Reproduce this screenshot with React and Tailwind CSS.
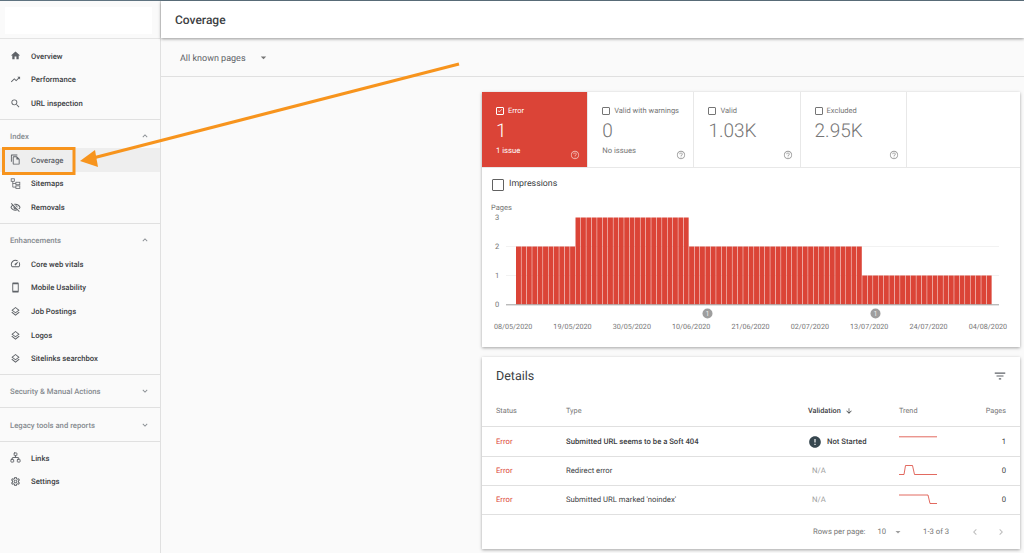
import React from "react";
import {
  MdHome,
  MdTrendingUp,
  MdSearch,
  MdOutlineFileCopy,
  MdOutlineVisibilityOff,
  MdOutlineSpeed,
  MdOutlineSmartphone,
  MdOutlineLayers,
  MdOutlineSettings,
  MdExpandLess,
  MdExpandMore,
  MdOutlineHelpOutline,
  MdFilterList,
  MdArrowDownward,
  MdChevronLeft,
  MdChevronRight,
  MdArrowDropDown,
  MdError,
  MdCheck,
} from "react-icons/md";
import { Network } from "lucide-react";

const SitemapIcon = ({ className }) => (
  <svg viewBox="0 0 14 14" fill="none" stroke="currentColor" strokeWidth="1" className={className}>
    <rect x="1.5" y="1" width="4" height="3.2" />
    <rect x="7.5" y="5.4" width="5" height="3.2" />
    <rect x="7.5" y="10" width="5" height="3.2" />
    <path d="M3.5 4.2V11.6H7.5M3.5 7H7.5" />
  </svg>
);

const NavItem = ({ icon: Icon, label, active }) => (
  <div className={`flex h-[23.7px] items-center pl-[10px] ${active ? "bg-[#eeeeee]" : ""}`}>
    <Icon className="h-[11px] w-[11px] shrink-0 text-[#5f6368]" />
    <span className={`ml-[10px] pt-px text-[7.7px] font-medium ${active ? "text-[#5f6368]" : "text-[#3c4043]"}`}>{label}</span>
  </div>
);

const SectionHead = ({ label, open, className }) => (
  <div className={`flex items-center justify-between pl-[10px] pr-[10px] text-[7.7px] font-medium text-[#868b90] ${className}`}>
    <span className="pt-[2px]">{label}</span>
    {open ? <MdExpandLess className="h-[10px] w-[10px]" /> : <MdExpandMore className="h-[10px] w-[10px]" />}
  </div>
);

const Sidebar = () => (
  <aside className="flex w-[161px] shrink-0 flex-col border-r border-[#e0e0e0] bg-[#fafafa]">
    <div className="h-[38px] shrink-0 border-b border-[#e4e4e4] px-[5px] pt-[6px]">
      <div className="h-[27px] w-[147px] bg-white" />
    </div>
    <div className="border-b border-[#e0e0e0] pb-[4px] pt-[5px]">
      <NavItem icon={MdHome} label="Overview" />
      <NavItem icon={MdTrendingUp} label="Performance" />
      <NavItem icon={MdSearch} label="URL inspection" />
    </div>
    <div className="border-b border-[#e0e0e0] pb-[4px]">
      <SectionHead label="Index" open className="h-[28px] pt-[4px]" />
      <NavItem icon={MdOutlineFileCopy} label="Coverage" active />
      <NavItem icon={SitemapIcon} label="Sitemaps" />
      <NavItem icon={MdOutlineVisibilityOff} label="Removals" />
    </div>
    <div className="border-b border-[#e0e0e0] pb-[3.5px]">
      <SectionHead label="Enhancements" open className="h-[28px] pt-[4px]" />
      <NavItem icon={MdOutlineSpeed} label="Core web vitals" />
      <NavItem icon={MdOutlineSmartphone} label="Mobile Usability" />
      <NavItem icon={MdOutlineLayers} label="Job Postings" />
      <NavItem icon={MdOutlineLayers} label="Logos" />
      <NavItem icon={MdOutlineLayers} label="Sitelinks searchbox" />
    </div>
    <SectionHead label="Security & Manual Actions" className="h-[33px] border-b border-[#e0e0e0]" />
    <SectionHead label="Legacy tools and reports" className="h-[34px] border-b border-[#e0e0e0]" />
    <div className="pt-[4px]">
      <NavItem icon={Network} label="Links" />
      <NavItem icon={MdOutlineSettings} label="Settings" />
    </div>
  </aside>
);

const Tab = ({ label, value, sub, active }) => (
  <div
    className={`relative h-[75px] w-[106.2px] border-r border-[#e8e8e8] pl-[14px] ${
      active ? "bg-[#db4437] text-white" : "bg-white text-[#757575]"
    }`}
  >
    <div className="flex items-center pt-[14px] text-[7.5px] leading-[9px]">
      <span
        className={`mr-[4px] flex h-[8px] w-[8px] items-center justify-center rounded-[1px] border ${
          active ? "border-white" : "border-[#757575]"
        }`}
      >
        {active && <MdCheck className="h-[7px] w-[7px]" />}
      </span>
      <span>{label}</span>
    </div>
    <div className="mt-[4px] text-[19px] font-light leading-[24px]">{value}</div>
    {sub && <div className="mt-[3px] text-[7.7px] leading-[10px]">{sub}</div>}
    <MdOutlineHelpOutline className={`absolute bottom-[7px] right-[7px] h-[10px] w-[10px] ${active ? "text-[#f0b5ae]" : "text-[#9e9e9e]"}`} />
  </div>
);

// daily bars, height in pages: 11 at 2, 21 at 3, 32 at 2, 24 at 1
const bars = [
  ...Array(11).fill(2),
  ...Array(21).fill(3),
  ...Array(32).fill(2),
  ...Array(24).fill(1),
];

const dates = [
  "08/05/2020",
  "19/05/2020",
  "30/05/2020",
  "10/06/2020",
  "21/06/2020",
  "02/07/2020",
  "13/07/2020",
  "24/07/2020",
  "04/08/2020",
];

// plot coordinates are the card's: x from its left edge, y from the top of the svg
const Chart = () => {
  const base = 103.5;
  return (
    <svg width="538" height="120" className="block">
      <text x="9" y="9" fontSize="7.5" fill="#757575" fontFamily="Roboto">Pages</text>
      {[0, 1, 2, 3].map((n) => (
        <text key={n} x="15" y={base - n * 29 + 2.5} fontSize="7.5" fill="#757575" fontFamily="Roboto" textAnchor="middle">
          {n}
        </text>
      ))}
      <line x1="24" x2="517" y1={base - 29} y2={base - 29} stroke="#f2f2f2" />
      <line x1="24" x2="517" y1={base - 58} y2={base - 58} stroke="#f2f2f2" />
      {bars.map((h, i) => (
        <rect key={i} x={34 + i * 5.41} y={base - h * 29} width="4.95" height={h * 29} fill="#db4437" />
      ))}
      <line x1="24" x2="517" y1={base + 0.3} y2={base + 0.3} stroke="#9e9e9e" />
      {[225.5, 393.5].map((x) => (
        <g key={x}>
          <circle cx={x} cy="112.5" r="5" fill="#9e9e9e" />
          <text x={x} y="115" fontSize="7" fill="#eeeeee" textAnchor="middle" fontFamily="Roboto">1</text>
        </g>
      ))}
    </svg>
  );
};

const Spark = ({ d }) => (
  <svg width="38" height="20" viewBox="0 0 38 20" fill="none" stroke="#db4437" strokeWidth="0.8" className="block">
    <path d={d} />
  </svg>
);

const rows = [
  { type: "Submitted URL seems to be a Soft 404", bold: true, pages: 1, d: "M0 4.8H38", h: "h-[30px]" },
  { type: "Redirect error", pages: 0, d: "M0 13.5H5L6.5 4.5H13.5L15.5 13.5H38", h: "h-[29px]" },
  { type: "Submitted URL marked 'noindex'", pages: 0, d: "M0 5H29L31 13.5H38", h: "h-[29px]" },
];

const DetailRow = ({ row }) => (
  <div className={`flex items-center border-b border-[#e0e0e0] text-[7.7px] ${row.h}`}>
    <span className="w-[84px] shrink-0 pl-[14px] text-[#db4437]">Error</span>
    <span className={`w-[242px] shrink-0 text-[#3c4043] ${row.bold ? "font-medium" : ""}`}>{row.type}</span>
    <span className="w-[91px] shrink-0">
      {row.bold ? (
        <span className="flex items-center font-medium text-[#3c4043]">
          <MdError className="h-[14px] w-[14px] text-[#37474f]" />
          <span className="ml-[5px]">Not Started</span>
        </span>
      ) : (
        <span className="pl-[4px] text-[#9e9e9e]">N/A</span>
      )}
    </span>
    <Spark d={row.d} />
    <span className="flex-1 pr-[14px] text-right text-[#3c4043]">{row.pages}</span>
  </div>
);

const Details = () => (
  <section className="h-[192px] bg-white shadow-[0_1px_3px_rgba(0,0,0,0.35)]">
    <div className="flex h-[36px] items-center justify-between pl-[14px] pr-[13px] pt-[2px]">
      <h2 className="pt-[2px] text-[12.5px] text-[#3c4043]">Details</h2>
      <MdFilterList className="h-[14px] w-[14px] text-[#5f6368]" />
    </div>
    <div className="flex h-[34px] items-center border-b border-[#e0e0e0] pt-[3px] text-[7.3px] text-[#757575]">
      <span className="w-[84px] shrink-0 pl-[14px]">Status</span>
      <span className="w-[242px] shrink-0">Type</span>
      <span className="flex w-[91px] shrink-0 items-center font-medium text-[#3c4043]">
        Validation
        <MdArrowDownward className="ml-[4px] h-[8px] w-[8px]" />
      </span>
      <span>Trend</span>
      <span className="flex-1 pr-[14px] text-right">Pages</span>
    </div>
    {rows.map((row) => (
      <DetailRow key={row.type} row={row} />
    ))}
    <div className="flex h-[33px] items-center pt-[1px] text-[7.7px] text-[#757575]">
      <span className="ml-[331px]">Rows per page:</span>
      <span className="ml-[12px]">10</span>
      <MdArrowDropDown className="ml-[6px] h-[12px] w-[12px] text-[#9e9e9e]" />
      <span className="ml-[19px]">1-3 of 3</span>
      <MdChevronLeft className="ml-[20px] h-[12px] w-[12px] text-[#bdbdbd]" />
      <MdChevronRight className="ml-[14px] h-[12px] w-[12px] text-[#bdbdbd]" />
    </div>
  </section>
);

const Arrow = () => (
  <svg width="1024" height="553" className="pointer-events-none absolute left-0 top-0">
    <rect x="3.5" y="148.5" width="70.5" height="25" fill="none" stroke="#f7941d" strokeWidth="3" />
    <line x1="459" y1="64" x2="93" y2="158" stroke="#f7941d" strokeWidth="3" />
    <polygon points="80,161 95,150 98,167" fill="#f7941d" />
  </svg>
);

export default function App() {
  return (
    <div className="relative h-[553px] w-[1024px] overflow-hidden bg-[#fafafa] font-['Roboto',sans-serif] [text-rendering:geometricPrecision]">
      <div className="h-px bg-[#5f7380]" />
      <div className="flex h-[552px]">
        <Sidebar />
        <main className="flex min-w-0 flex-1 flex-col">
          <header className="flex h-[37px] shrink-0 items-center bg-white pl-[14px] shadow-[0_1px_3px_rgba(0,0,0,0.4)]">
            <h1 className="text-[12px] font-medium text-[#3c4043]">Coverage</h1>
          </header>
          <div className="flex h-[39px] shrink-0 items-center border-b border-[#e0e0e0] pl-[19px] text-[9px] text-[#5f6368]">
            <span className="pt-[6px]">All known pages</span>
            <MdArrowDropDown className="ml-[11px] h-[13px] w-[13px] text-[#757575]" />
          </div>
          <div className="flex flex-col gap-[10px] pl-[321px] pr-[4px] pt-[15px]">
            <section className="h-[255px] bg-white shadow-[0_1px_3px_rgba(0,0,0,0.35)]">
              <div className="flex">
                <Tab label="Error" value="1" sub="1 issue" active />
                <Tab label="Valid with warnings" value="0" sub="No issues" />
                <Tab label="Valid" value="1.03K" />
                <Tab label="Excluded" value="2.95K" />
              </div>
              <div className="h-[34px] border-t border-[#e8e8e8]">
                <div className="flex items-center pl-[10px] pt-[10px] text-[8.8px] text-[#3c4043]">
                  <span className="mr-[5px] h-[12px] w-[12px] rounded-[1px] border-[1.5px] border-[#616161]" />
                  <span>Impressions</span>
                </div>
              </div>
              <Chart />
              <div className="flex justify-between pl-[12px] pr-[13px] pt-[1px] text-[7.2px] text-[#757575]">
                {dates.map((date) => (
                  <span key={date}>{date}</span>
                ))}
              </div>
            </section>
            <Details />
          </div>
        </main>
      </div>
      <Arrow />
    </div>
  );
}
